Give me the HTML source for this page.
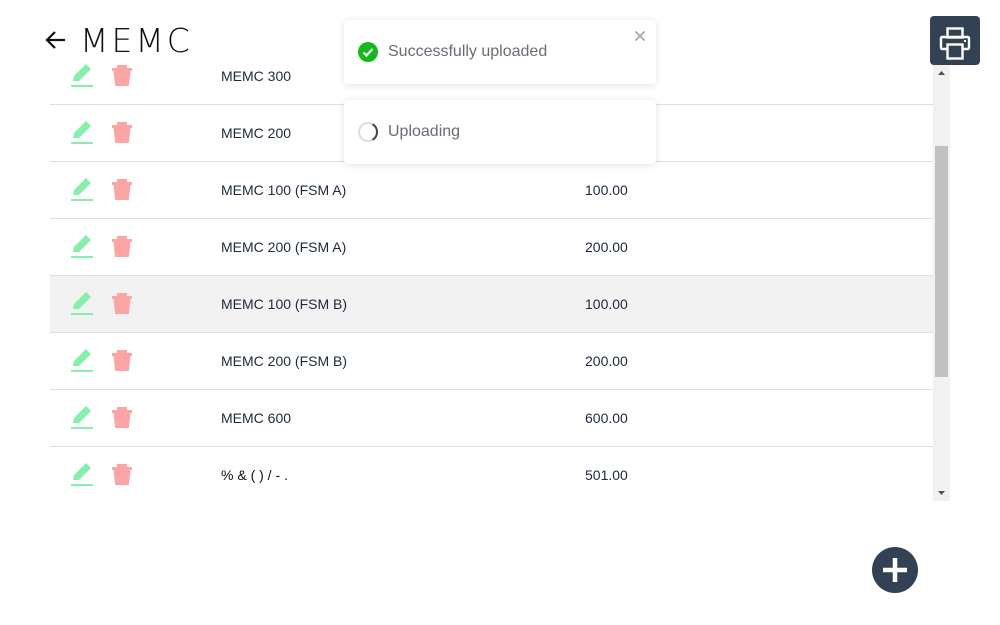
<!DOCTYPE html>
<html><head><meta charset="utf-8"><style>
*{margin:0;padding:0;box-sizing:border-box}
body{width:1000px;height:625px;background:#fff;position:relative;overflow:hidden;font-family:"Liberation Sans",Arial,sans-serif}
.title{position:absolute;left:44px;top:20px;height:40px;display:flex;align-items:center}
.title span{font-size:33px;letter-spacing:3px;color:#111;margin-left:12px;font-family:"DejaVu Sans","Liberation Sans",sans-serif;font-weight:200}
.view{position:absolute;left:50px;top:48px;width:883px;height:453px;overflow:hidden}
.row{position:absolute;left:0;width:883px;height:57px;border-bottom:1px solid #dedede}
.row.hl{background:#f2f2f2}
.row svg{position:absolute;left:0;top:0}
.name{position:absolute;left:171px;top:20px;font-size:14px;color:#1e293b}
.val{position:absolute;left:535px;top:20px;font-size:14px;color:#1e293b}
.sb{position:absolute;left:933px;top:65px;width:17px;height:436px;background:#f1f1f1}
.thumb{position:absolute;left:2px;top:81px;width:13px;height:231px;background:#c1c1c1}
.toast{position:absolute;left:344px;width:312px;height:64px;background:#fff;border-radius:4px;box-shadow:0 1px 8px rgba(0,0,0,.12);font-size:16px;color:#6b6b75}
.print{position:absolute;left:930px;top:16px;width:50px;height:49px;background:#334155;border-radius:4px}
.fab{position:absolute;left:872px;top:547px;width:46px;height:46px;border-radius:50%;background:#334155}
</style></head><body>
<div class="title"><svg width="24" height="24" viewBox="0 0 24 24"><path d="M21 12H3M11 4l-8 8 8 8" fill="none" stroke="#111" stroke-width="2.2"/></svg><span>MEMC</span></div>
<div class="view">
<div class="row" style="top:0"><svg width="100" height="57"><polygon points="23,33 24,28 36,16 41,21 29,33" fill="#86efac"/><rect x="21" y="37" width="22" height="2" fill="#86efac"/><path d="M67 17h10v3h-10z M62 20h20v3h-20z M63.5 23h17l-1.5 14q0 1-1 1h-12q-1 0-1-1z" fill="#fca5a5"/></svg><div class="name">MEMC 300</div></div>
<div class="row" style="top:57px"><svg width="100" height="57"><polygon points="23,33 24,28 36,16 41,21 29,33" fill="#86efac"/><rect x="21" y="37" width="22" height="2" fill="#86efac"/><path d="M67 17h10v3h-10z M62 20h20v3h-20z M63.5 23h17l-1.5 14q0 1-1 1h-12q-1 0-1-1z" fill="#fca5a5"/></svg><div class="name">MEMC 200</div></div>
<div class="row" style="top:114px"><svg width="100" height="57"><polygon points="23,33 24,28 36,16 41,21 29,33" fill="#86efac"/><rect x="21" y="37" width="22" height="2" fill="#86efac"/><path d="M67 17h10v3h-10z M62 20h20v3h-20z M63.5 23h17l-1.5 14q0 1-1 1h-12q-1 0-1-1z" fill="#fca5a5"/></svg><div class="name">MEMC 100 (FSM A)</div><div class="val">100.00</div></div>
<div class="row" style="top:171px"><svg width="100" height="57"><polygon points="23,33 24,28 36,16 41,21 29,33" fill="#86efac"/><rect x="21" y="37" width="22" height="2" fill="#86efac"/><path d="M67 17h10v3h-10z M62 20h20v3h-20z M63.5 23h17l-1.5 14q0 1-1 1h-12q-1 0-1-1z" fill="#fca5a5"/></svg><div class="name">MEMC 200 (FSM A)</div><div class="val">200.00</div></div>
<div class="row hl" style="top:228px"><svg width="100" height="57"><polygon points="23,33 24,28 36,16 41,21 29,33" fill="#86efac"/><rect x="21" y="37" width="22" height="2" fill="#86efac"/><path d="M67 17h10v3h-10z M62 20h20v3h-20z M63.5 23h17l-1.5 14q0 1-1 1h-12q-1 0-1-1z" fill="#fca5a5"/></svg><div class="name">MEMC 100 (FSM B)</div><div class="val">100.00</div></div>
<div class="row" style="top:285px"><svg width="100" height="57"><polygon points="23,33 24,28 36,16 41,21 29,33" fill="#86efac"/><rect x="21" y="37" width="22" height="2" fill="#86efac"/><path d="M67 17h10v3h-10z M62 20h20v3h-20z M63.5 23h17l-1.5 14q0 1-1 1h-12q-1 0-1-1z" fill="#fca5a5"/></svg><div class="name">MEMC 200 (FSM B)</div><div class="val">200.00</div></div>
<div class="row" style="top:342px"><svg width="100" height="57"><polygon points="23,33 24,28 36,16 41,21 29,33" fill="#86efac"/><rect x="21" y="37" width="22" height="2" fill="#86efac"/><path d="M67 17h10v3h-10z M62 20h20v3h-20z M63.5 23h17l-1.5 14q0 1-1 1h-12q-1 0-1-1z" fill="#fca5a5"/></svg><div class="name">MEMC 600</div><div class="val">600.00</div></div>
<div class="row" style="top:399px;border-bottom:none"><svg width="100" height="57"><polygon points="23,33 24,28 36,16 41,21 29,33" fill="#86efac"/><rect x="21" y="37" width="22" height="2" fill="#86efac"/><path d="M67 17h10v3h-10z M62 20h20v3h-20z M63.5 23h17l-1.5 14q0 1-1 1h-12q-1 0-1-1z" fill="#fca5a5"/></svg><div class="name" style="color:#111">% &amp; ( ) / - .</div><div class="val">501.00</div></div>
</div>
<div class="sb"><svg width="17" height="436" style="position:absolute;left:0;top:0"><path d="M5 10h7l-3.5-4z" fill="#505050"/><path d="M5 426h7l-3.5 4z" fill="#505050"/></svg><div class="thumb"></div></div>
<div class="toast" style="top:20px"><svg width="20" height="20" style="position:absolute;left:14px;top:22px"><circle cx="10" cy="10" r="10" fill="#16b81e"/><path d="M5.5 10.5l3 3 6-6.5" fill="none" stroke="#fff" stroke-width="2.2"/></svg><div style="position:absolute;left:44px;top:23px">Successfully uploaded</div><svg width="12" height="12" style="position:absolute;left:290px;top:10px"><path d="M1.5 1.5l9 9M10.5 1.5l-9 9" stroke="#aaa" stroke-width="1.8"/></svg></div>
<div class="toast" style="top:100px"><svg width="22" height="22" style="position:absolute;left:13px;top:21px"><circle cx="11" cy="11" r="9" fill="none" stroke="#ddd" stroke-width="2"/><path d="M15.5 3.2A9 9 0 0 1 15.5 18.8" fill="none" stroke="#444" stroke-width="2"/></svg><div style="position:absolute;left:44px;top:23px">Uploading</div></div>
<div class="print"><svg width="50" height="49"><g fill="none" stroke="#fff" stroke-width="2.4"><rect x="17.5" y="12.5" width="15" height="9"/><path d="M17 33h-4.5q-1.5 0-1.5-1.5v-9q0-1.5 1.5-1.5h25q1.5 0 1.5 1.5v9q0 1.5-1.5 1.5H33"/><rect x="17.5" y="28.5" width="15" height="14"/></g><rect x="34" y="24" width="2" height="2" fill="#fff"/></svg></div>
<div class="fab"><svg width="46" height="46"><path d="M23 11v24M11 23h24" stroke="#fff" stroke-width="4.5"/></svg></div>
</body></html>
